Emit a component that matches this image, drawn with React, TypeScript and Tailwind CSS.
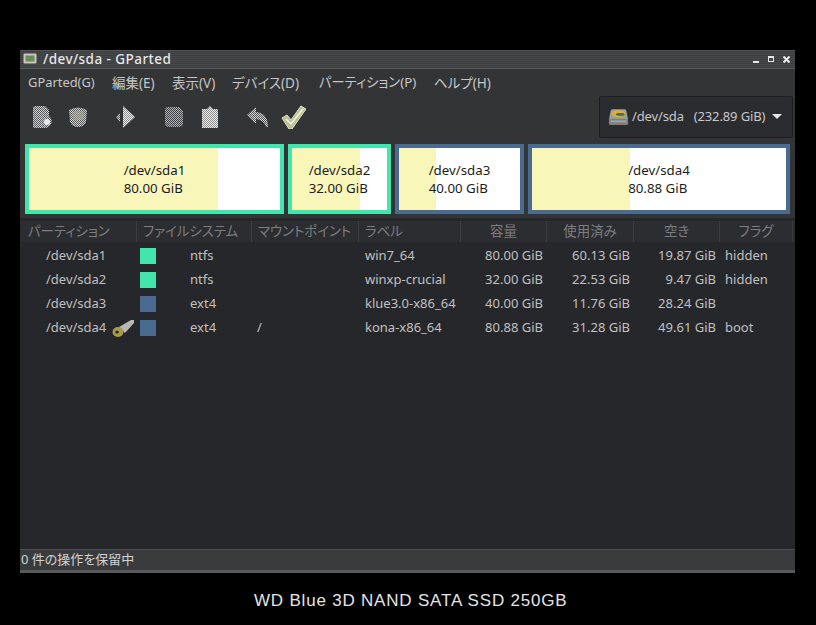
const font = "font-['Noto_Sans','Noto_Sans_CJK_JP',sans-serif] [font-feature-settings:'palt']";

const partitions = [
  { name: "/dev/sda1", fs: "ntfs", mount: "", label: "win7_64", size: "80.00 GiB", used: "60.13 GiB", free: "19.87 GiB", flag: "hidden", color: "bg-[#42e5ac]", key: false },
  { name: "/dev/sda2", fs: "ntfs", mount: "", label: "winxp-crucial", size: "32.00 GiB", used: "22.53 GiB", free: "9.47 GiB", flag: "hidden", color: "bg-[#42e5ac]", key: false },
  { name: "/dev/sda3", fs: "ext4", mount: "", label: "klue3.0-x86_64", size: "40.00 GiB", used: "11.76 GiB", free: "28.24 GiB", flag: "", color: "bg-[#4a6b8f]", key: false },
  { name: "/dev/sda4", fs: "ext4", mount: "/", label: "kona-x86_64", size: "80.88 GiB", used: "31.28 GiB", free: "49.61 GiB", flag: "boot", color: "bg-[#4a6b8f]", key: true },
];

const menus = [
  { text: "GParted(G)", w: "w-[84px] text-[12.9px]" },
  { text: "編集(E)", w: "w-[60px] text-[13.5px]" },
  { text: "表示(V)", w: "w-[60px] text-[13.5px]" },
  { text: "デバイス(D)", w: "w-[87px] text-[13.5px]" },
  { text: "パーティション(P)", w: "w-[115px] text-[13.3px]" },
  { text: "ヘルプ(H)", w: "w-[70px] text-[13.5px]" },
];

const headers = [
  { text: "パーティション", cls: "pl-2" },
  { text: "ファイルシステム", cls: "pl-[6px]" },
  { text: "マウントポイント", cls: "pl-[6px]" },
  { text: "ラベル", cls: "pl-[6px]" },
  { text: "容量", cls: "justify-center" },
  { text: "使用済み", cls: "justify-center" },
  { text: "空き", cls: "justify-center" },
  { text: "フラグ", cls: "justify-center" },
];

function Dither({ children, w = 24 }: { children: React.ReactNode; w?: number }) {
  return (
    <svg width={w} height="24" viewBox="0 0 24 24" className="shrink-0">
      {children}
    </svg>
  );
}

function Toolbar() {
  return (
    <div className="flex items-center h-[44px] pl-[4px] pb-[5px]">
      <svg width="0" height="0" className="absolute">
        <defs>
          <pattern id="dith" width="2" height="2" patternUnits="userSpaceOnUse">
            <rect width="2" height="2" fill="#55565a" />
            <rect width="1" height="1" fill="#d0d0d0" />
            <rect x="1" y="1" width="1" height="1" fill="#d0d0d0" />
          </pattern>
          <pattern id="dithDark" width="2" height="2" patternUnits="userSpaceOnUse">
            <rect width="2" height="2" fill="#3c3d40" />
            <rect width="1" height="1" fill="#b4b4b4" />
            <rect x="1" y="1" width="1" height="1" fill="#b4b4b4" />
          </pattern>
          <pattern id="dithLight" width="2" height="2" patternUnits="userSpaceOnUse">
            <rect width="2" height="2" fill="#8a8a8a" />
            <rect width="1" height="1" fill="#f0f0f0" />
            <rect x="1" y="1" width="1" height="1" fill="#f0f0f0" />
          </pattern>
        </defs>
      </svg>
      <div className="w-[36px] flex justify-center">
        <Dither>
          <path d="M3 3 Q3 1 6 1 H15 L19 5 V11 Q23 14 21 19 Q19 23 15 23 H6 Q3 23 3 21Z" fill="url(#dith)" />
          <circle cx="17" cy="17" r="3" fill="#e8e8e8" />
        </Dither>
      </div>
      <div className="w-[36px] flex justify-center">
        <Dither>
          <path d="M3 5 Q12 0 21 5 L20 17 Q18 22 12 22 Q6 22 4 17Z" fill="url(#dith)" />
          <path d="M6 7 Q12 4 18 7 L17 15 H7Z" fill="#a8a88c" opacity="0.55" />
        </Dither>
      </div>
      <div className="w-[60px] flex justify-center">
        <Dither>
          <path d="M9 1 L21 12 L9 23Z" fill="url(#dithLight)" />
          <path d="M6 8 L2 12 L6 17Z" fill="url(#dith)" />
          <rect x="7" y="5" width="2" height="15" fill="#2f3033" />
        </Dither>
      </div>
      <div className="w-[36px] flex justify-center">
        <Dither>
          <path d="M6 2 H17 L21 6 V18 Q21 22 17 22 H7 Q3 22 3 18 V5 Q3 2 6 2Z" fill="url(#dithDark)" />
        </Dither>
      </div>
      <div className="w-[36px] flex justify-center">
        <Dither>
          <path d="M4 4 H9 L12 1 L15 4 H20 V23 H4Z" fill="url(#dithLight)" />
        </Dither>
      </div>
      <div className="w-[60px] flex justify-center">
        <Dither>
          <path d="M10 2 V7 Q22 8 22 22 L20 22 Q18 15 10 14 V19 L1 10Z" fill="url(#dith)" />
        </Dither>
      </div>
      <div className="w-[26px] flex justify-center -ml-[8px]">
        <Dither w={26}>
          <path d="M1 13 L6 10 L10 15 L20 1 L25 4 L11 24 H8Z" fill="#bcc094" stroke="#e2e4cc" strokeWidth="1" />
          <path d="M5 14 L10 19 L22 4" stroke="#f4f4ea" strokeWidth="1.5" fill="none" />
        </Dither>
      </div>
      <button className="ml-auto mr-[2px] flex items-center h-[42px] w-[194px] pl-[8px] bg-[#2b2c2f] border border-[#1c1d1f] rounded-[2px] text-[13px] tracking-[-0.12px] text-[#c8c8c8]">
        <svg width="21" height="20" viewBox="0 0 24 22" className="shrink-0">
          <path d="M3 4 Q3 2 5 2 H19 Q21 2 21 4 L23 14 H1Z" fill="#9aa09a" />
          <ellipse cx="12" cy="7" rx="8" ry="4" fill="#d8b040" />
          <ellipse cx="14" cy="8" rx="5" ry="1.5" fill="#3a6a70" />
          <rect x="1" y="13" width="22" height="7" rx="1.5" fill="#7c807c" />
          <rect x="3" y="15" width="18" height="2" fill="#a6aaa6" />
        </svg>
        <span className="ml-[3px] whitespace-pre">/dev/sda   (232.89 GiB)</span>
        <span className="ml-[7px] w-0 h-0 border-x-[5px] border-x-transparent border-t-[5px] border-t-[#e6e6e6]" />
      </button>
    </div>
  );
}

function MapBlock({ w, yellow, name, size, border }: { w: string; yellow: string; name: string; size: string; border: string }) {
  return (
    <div className={`${w} h-[70px] border-4 ${border} relative flex bg-white`}>
      <div className={`${yellow} h-full bg-[#f9f6ba]`} />
      <div className="absolute inset-0 flex items-center justify-center">
        <div className="text-[13.3px] leading-[18px] text-[#1c1c1c]">
          <div>{name}</div>
          <div>{size}</div>
        </div>
      </div>
    </div>
  );
}

function KeyIcon() {
  return (
    <svg width="23" height="19" viewBox="0 0 23 19" className="shrink-0">
      <path d="M7 8 L19 1 L22 1 L22 4 L13 14Z" fill="#b8b8b2" />
      <ellipse cx="6" cy="13" rx="5.5" ry="5" fill="#a89a48" />
      <ellipse cx="5" cy="13" rx="1.8" ry="1.6" fill="#2a2a20" />
    </svg>
  );
}

export default function App() {
  return (
    <div className={`w-[816px] h-[625px] bg-black overflow-hidden flex flex-col pt-[50px] pl-[20px] ${font}`}>
      <div className="w-[775px] h-[523px] flex flex-col bg-[#26272b] border-t border-[#555]">
        {/* title bar */}
        <div className="h-[18px] flex items-center pb-[1px] bg-[repeating-linear-gradient(0deg,#3d3e40_0px,#3d3e40_1px,#47484a_1px,#47484a_2px)] border-b border-[#59595b] text-[#e6e6e6]">
          <svg width="14" height="12" viewBox="0 0 14 12" className="ml-[3px] shrink-0">
            <rect x="0.5" y="0.5" width="13" height="10" rx="1" fill="#c8c8c0" />
            <rect x="2.5" y="2.5" width="9" height="6" fill="#6e8a5a" />
          </svg>
          <span className="ml-[6px] text-[13.5px] tracking-[0.45px] font-medium">/dev/sda - GParted</span>
          <div className="ml-auto flex items-center gap-[9px] pr-[5px]">
            <span className="mt-[5px] w-[6px] h-[2px] bg-[#e6e6e6]" />
            <span className="w-[6px] h-[6px] border border-t-2 border-[#e6e6e6]" />
            <svg width="7" height="7" viewBox="0 0 7 7">
              <path d="M0.5 0.5 L6.5 6.5 M6.5 0.5 L0.5 6.5" stroke="#eeeeee" strokeWidth="2" />
            </svg>
          </div>
        </div>

        {/* menu */}
        <div className="bg-[#333436]">
          <div className="h-[28px] flex items-center pl-[8px] text-[#c6c6c6]">
            {menus.map((m) => (
              <span key={m.text} className={`${m.w} whitespace-nowrap`}>{m.text}</span>
            ))}
          </div>
          <Toolbar />
          <div className="flex gap-[4px] pl-[5px] pb-[4px] pt-[3px]">
            <MapBlock w="w-[259px]" yellow="w-[189px]" name="/dev/sda1" size="80.00 GiB" border="border-[#42e5ac]" />
            <MapBlock w="w-[103px]" yellow="w-[68px]" name="/dev/sda2" size="32.00 GiB" border="border-[#42e5ac]" />
            <MapBlock w="w-[129px]" yellow="w-[37px]" name="/dev/sda3" size="40.00 GiB" border="border-[#4a6b8f]" />
            <MapBlock w="w-[262px]" yellow="w-[98px]" name="/dev/sda4" size="80.88 GiB" border="border-[#4a6b8f]" />
          </div>
        </div>

        {/* table */}
        <div className="grow flex flex-col text-[13px] text-[#c0c0c0]">
          <div className="h-[21px] mt-[3px] grid grid-cols-[117px_115px_107px_102px_86px_87px_86px_73px] bg-[#2c2d31] text-[#7c7d80] text-[13.4px]">
            {headers.map((h) => (
              <div key={h.text} className={`${h.cls} flex items-center border-r border-[#3c3d41] whitespace-nowrap`}>
                {h.text}
              </div>
            ))}
          </div>
          <div className="pt-[2px]">
            {partitions.map((p) => (
              <div key={p.name} className="h-[24px] grid grid-cols-[117px_115px_107px_102px_86px_87px_86px_73px] items-center">
                <div className="pl-[26px] flex items-center gap-[6px] whitespace-nowrap">
                  {p.name}
                  {p.key && <KeyIcon />}
                </div>
                <div className="pl-[3px] flex items-center">
                  <span className={`w-[16px] h-[16px] ${p.color}`} />
                  <span className="ml-[34px]">{p.fs}</span>
                </div>
                <div className="pl-[5px]">{p.mount}</div>
                <div className="pl-[6px] whitespace-nowrap">{p.label}</div>
                <div className="text-right pr-[4px]">{p.size}</div>
                <div className="text-right pr-[4px]">{p.used}</div>
                <div className="text-right pr-[4px]">{p.free}</div>
                <div className="pl-[5px]">{p.flag}</div>
              </div>
            ))}
          </div>
        </div>

        {/* status bar */}
        <div className="h-[21px] flex items-center pl-[1px] bg-[#3a3b3d] border-t border-[#4c4d50] text-[13px] text-[#d2d2d2]">
          0 件の操作を保留中
        </div>
        <div className="h-[3px] bg-[#58595b]" />
      </div>
      <div className="w-[775px] -ml-[20px] mt-[18px] pl-[254px] text-[17px] leading-[20px] tracking-[0.8px] text-[#e4e4e4] font-['Liberation_Sans',sans-serif] font-light whitespace-nowrap">
        WD Blue 3D NAND SATA SSD 250GB
      </div>
    </div>
  );
}
